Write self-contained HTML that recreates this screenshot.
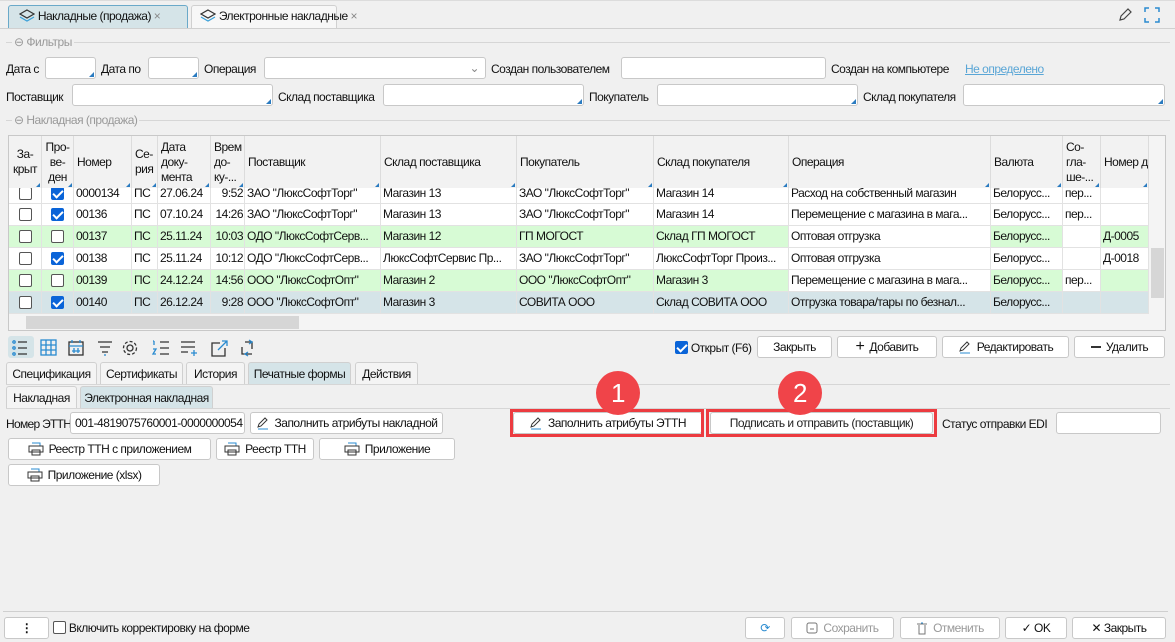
<!DOCTYPE html><html><head><meta charset="utf-8"><style>
*{box-sizing:border-box;margin:0;padding:0}
body{width:1175px;height:642px;background:#f0f0f0;font-family:"Liberation Sans",sans-serif;font-size:12px;color:#111;position:relative;overflow:hidden;letter-spacing:-0.5px}
.a{position:absolute}
.inp{position:absolute;background:#fff;border:1px solid #c8c8c8;border-radius:3px;height:22px;white-space:nowrap;overflow:hidden}
.inp.t::after{content:"";position:absolute;right:1px;bottom:1px;border-left:5px solid transparent;border-bottom:5px solid #2a7bc0}
.lbl{position:absolute;white-space:nowrap}
.btn{position:absolute;background:#fff;border:1px solid #c8c8c8;border-radius:3px;height:22px;display:flex;align-items:center;justify-content:center;white-space:nowrap;gap:5px;overflow:hidden}
.grp{position:absolute;color:#999;white-space:nowrap}
.hl{position:absolute;height:1px;background:#d6d6d6}
.tab{position:absolute;height:22px;border:1px solid #d0d0d0;border-bottom:none;border-radius:3px 3px 0 0;background:#f4f4f4;display:flex;align-items:center;justify-content:center;white-space:nowrap}
.tab.s{background:#d5e4e8}
.grid{position:absolute;left:8px;top:135px;width:1158px;height:196px;border:1px solid #c8c8c8;background:#fff;overflow:hidden}
.c{position:absolute;overflow:hidden;white-space:nowrap;text-overflow:ellipsis;padding:0 2px;border-right:1px solid #e2e2e2;border-bottom:1px solid #e2e2e2;line-height:21px;height:22px}
.h{position:absolute;z-index:2;background:#f2f2f2;border-right:1px solid #dcdcdc;padding:2px 3px;height:52px;line-height:15px;display:flex;align-items:center;overflow:hidden;white-space:nowrap}
.h::after{content:"";position:absolute;right:1px;bottom:1px;border-left:4px solid transparent;border-bottom:4px solid #2a7bc0}
.cb{display:inline-block;width:13px;height:13px;border:1px solid #555;border-radius:2px;background:#fff;vertical-align:middle}
.cb.on{background:#0a64d8;border-color:#0a64d8;position:relative}
.cb.on::after{content:"";position:absolute;left:3px;top:0px;width:4px;height:8px;border:solid #fff;border-width:0 2px 2px 0;transform:rotate(45deg)}
.badge{position:absolute;width:44px;height:44px;border-radius:50%;background:#f04449;color:#fff;font-size:26px;display:flex;align-items:center;justify-content:center}
.red{position:absolute;border:3px solid #ec3b40}
</style></head><body>
<div class="a" style="left:0;top:0;width:1175px;height:1px;background:#dcdcdc"></div>
<div class="a" style="left:8px;top:5px;width:180px;height:23px;background:#d5e4e8;border:1px solid #6aa9c9;border-bottom:none;border-radius:3px 3px 0 0"></div>
<div class="lbl" style="left:19px;top:9px">
<svg width="16" height="14" style="vertical-align:-3px"><path d="M8 1L15 5 8 9 1 5Z" fill="none" stroke="#333" stroke-width="1.2"/><path d="M1 8L8 12 15 8" fill="none" stroke="#3aa0d8" stroke-width="1.2"/></svg> Накладные (продажа) <span style="color:#888">×</span></div>
<div class="a" style="left:191px;top:5px;width:146px;height:23px;background:#f7f7f7;border:1px solid #d0d0d0;border-bottom:none;border-radius:3px 3px 0 0"></div>
<div class="lbl" style="left:200px;top:9px">
<svg width="16" height="14" style="vertical-align:-3px"><path d="M8 1L15 5 8 9 1 5Z" fill="none" stroke="#333" stroke-width="1.2"/><path d="M1 8L8 12 15 8" fill="none" stroke="#3aa0d8" stroke-width="1.2"/></svg> Электронные накладные <span style="color:#888">×</span></div>
<div class="a" style="left:0;top:28px;width:1175px;height:1px;background:#d0d0d0"></div>
<svg class="a" style="left:1117px;top:7px" width="16" height="16"><path d="M3 13L4 9 11 2 14 5 7 12Z" fill="none" stroke="#444" stroke-width="1.2"/></svg>
<svg class="a" style="left:1144px;top:7px" width="16" height="16"><path d="M1 5V1H5M11 1H15V5M15 11V15H11M5 15H1V11" fill="none" stroke="#2a8bd0" stroke-width="1.5"/></svg>

<div class="hl" style="left:6px;top:42px;width:1164px"></div>
<div class="grp" style="left:12px;top:35px;background:#f0f0f0;padding:0 2px">⊖ Фильтры</div>
<div class="lbl" style="left:6px;top:62px">Дата с</div><div class="inp t" style="left:45px;top:57px;width:51px"></div>
<div class="lbl" style="left:101px;top:62px">Дата по</div><div class="inp t" style="left:148px;top:57px;width:51px"></div>
<div class="lbl" style="left:204px;top:62px">Операция</div><div class="inp" style="left:264px;top:57px;width:222px"><span class="a" style="right:6px;top:3px;color:#888">⌄</span></div>
<div class="lbl" style="left:491px;top:62px">Создан пользователем</div><div class="inp" style="left:621px;top:57px;width:205px"></div>
<div class="lbl" style="left:831px;top:62px">Создан на компьютере</div><div class="lbl" style="left:965px;top:62px;color:#5aa6d6;text-decoration:underline">Не определено</div>
<div class="lbl" style="left:6px;top:90px">Поставщик</div><div class="inp t" style="left:72px;top:84px;width:201px"></div>
<div class="lbl" style="left:278px;top:90px">Склад поставщика</div><div class="inp t" style="left:383px;top:84px;width:201px"></div>
<div class="lbl" style="left:589px;top:90px">Покупатель</div><div class="inp t" style="left:657px;top:84px;width:201px"></div>
<div class="lbl" style="left:863px;top:90px">Склад покупателя</div><div class="inp t" style="left:963px;top:84px;width:202px"></div>
<div class="hl" style="left:6px;top:120px;width:1164px"></div>
<div class="grp" style="left:12px;top:113px;background:#f0f0f0;padding:0 2px">⊖ Накладная (продажа)</div>

<div class="grid">
<div class="h" style="left:0;top:0;width:33px;justify-content:center;text-align:center">За-<br>крыт</div>
<div class="h" style="left:33px;top:0;width:32px;justify-content:center;text-align:center">Про-<br>ве-<br>ден</div>
<div class="h" style="left:65px;top:0;width:58px">Номер</div>
<div class="h" style="left:123px;top:0;width:26px">Се-<br>рия</div>
<div class="h" style="left:149px;top:0;width:53px">Дата<br>доку-<br>мента</div>
<div class="h" style="left:202px;top:0;width:34px">Врем<br>до-<br>ку-...</div>
<div class="h" style="left:236px;top:0;width:136px">Поставщик</div>
<div class="h" style="left:372px;top:0;width:136px">Склад поставщика</div>
<div class="h" style="left:508px;top:0;width:137px">Покупатель</div>
<div class="h" style="left:645px;top:0;width:135px">Склад покупателя</div>
<div class="h" style="left:780px;top:0;width:202px">Операция</div>
<div class="h" style="left:982px;top:0;width:72px">Валюта</div>
<div class="h" style="left:1054px;top:0;width:38px">Со-<br>гла-<br>ше-...</div>
<div class="h" style="left:1092px;top:0;width:48px">Номер д</div>
<div class="a" style="left:1140px;top:0;width:17px;height:196px;background:#f4f4f4;z-index:3"></div>
<div class="a" style="left:1142px;top:112px;width:13px;height:50px;background:#d6d6d6;z-index:3"></div>
<div class="a" style="left:0;top:178px;width:1140px;height:17px;background:#f4f4f4;z-index:3"></div>
<div class="a" style="left:17px;top:180px;width:273px;height:13px;background:#d6d6d6;z-index:3"></div>
<div id="rows"></div>
</div>
<script>
var cols=[[0,33],[33,32],[65,58],[123,26],[149,53],[202,34],[236,136],[372,136],[508,137],[645,135],[780,202],[982,72],[1054,38],[1092,48]];
var R=[
[47,"#fff",0,1,"0000134","ПС","27.06.24","9:52",'ЗАО "ЛюксСофтТорг"',"Магазин 13",'ЗАО "ЛюксСофтТорг"',"Магазин 14","Расход на собственный магазин","Белорусс...","пер...",""],
[68,"#fff",0,1,"00136","ПС","07.10.24","14:26",'ЗАО "ЛюксСофтТорг"',"Магазин 13",'ЗАО "ЛюксСофтТорг"',"Магазин 14","Перемещение с магазина в мага...","Белорусс...","пер...",""],
[90,"#d7fbd5",0,0,"00137","ПС","25.11.24","10:03",'ОДО "ЛюксСофтСерв...',"Магазин 12","ГП МОГОСТ","Склад ГП МОГОСТ","Оптовая отгрузка","Белорусс...","","Д-0005"],
[112,"#fff",0,1,"00138","ПС","25.11.24","10:12",'ОДО "ЛюксСофтСерв...',"ЛюксСофтСервис Пр...",'ЗАО "ЛюксСофтТорг"',"ЛюксСофтТорг Произ...","Оптовая отгрузка","Белорусс...","","Д-0018"],
[134,"#d7fbd5",0,0,"00139","ПС","24.12.24","14:56",'ООО "ЛюксСофтОпт"',"Магазин 2",'ООО "ЛюксСофтОпт"',"Магазин 3","Перемещение с магазина в мага...","Белорусс...","пер...",""],
[156,"#d5e4e8",0,1,"00140","ПС","26.12.24","9:28",'ООО "ЛюксСофтОпт"',"Магазин 3","СОВИТА ООО","Склад СОВИТА ООО","Отгрузка товара/тары по безнал...","Белорусс...","",""]];
var h="";
R.forEach(function(r,i){var y=r[0];var ht=i==0?21:22;
cols.forEach(function(c,j){var bg=r[1];if(r[1]=="#d7fbd5"&&(j==10||j==12))bg="#fff";
var txt;if(j<2){txt='<span class="cb'+(r[2+j]?' on':'')+'"></span>';}else txt=r[2+j];
var st="left:"+c[0]+"px;top:"+y+"px;width:"+c[1]+"px;height:"+ht+"px;background:"+bg+";"+(j<2?"text-align:center;":"")+(j==5?"text-align:right;text-overflow:clip;padding:0 1px;":"");
h+='<div class="c" style="'+st+'">'+txt+'</div>';});});
document.getElementById("rows").innerHTML=h;
</script>

<div class="a" style="left:8px;top:336px;width:26px;height:22px;background:#d5e4e8;border-radius:3px"></div>
<svg class="a" style="left:12px;top:339px" width="250" height="18" fill="none" stroke-width="1.3">
<g stroke="#2a8bd0"><circle cx="2" cy="3" r="1.2"/><circle cx="2" cy="9" r="1.2"/><circle cx="2" cy="15" r="1.2"/></g><g stroke="#333"><path d="M6 3H15M6 9H15M6 15H15"/></g>
<rect x="29" y="1" width="15" height="15" stroke="#2a8bd0"/><path d="M29 6H44M29 11H44M34 1V16M39 1V16" stroke="#2a8bd0"/>
<rect x="57" y="3" width="14" height="13" stroke="#333"/><path d="M57 7H71M60 1V4M68 1V4M62 9V14M66 9V14M60 12H68" stroke="#2a8bd0"/>
<path d="M86 3H100M88 8H98M90 13H96" stroke="#333"/><path d="M92 16H94" stroke="#2a8bd0"/>
<circle cx="118" cy="9" r="3" stroke="#333"/><circle cx="118" cy="9" r="6.5" stroke="#333" stroke-dasharray="3 2"/>
<path d="M142 2V6M141 10H144L141 15H144M141 2H142" stroke="#2a8bd0"/><path d="M148 3H157M148 9H157M148 15H157" stroke="#333"/>
<path d="M169 3H183M169 8H183M169 13H176" stroke="#333"/><path d="M182 11V17M179 14H185" stroke="#2a8bd0"/>
<path d="M208 4H200V17H213V9" stroke="#333"/><path d="M206 11L215 2M210 2H215V7" stroke="#2a8bd0"/>
<path d="M233 3H240V10M230 8V15H240" stroke="#333"/><path d="M236 13L233 15 236 17M237 1L240 3 237 5" stroke="#2a8bd0"/>
</svg>
<div class="lbl" style="left:675px;top:341px"><span class="cb on" style="vertical-align:-2px"></span> Открыт (F6)</div>
<div class="btn" style="left:757px;top:336px;width:75px">Закрыть</div>
<div class="btn" style="left:837px;top:336px;width:100px"><b style="font-size:16px;font-weight:normal">+</b> Добавить</div>
<div class="btn" style="left:942px;top:336px;width:127px"><svg width="14" height="14"><path d="M2 11L3 8 9 2 11 4 5 10Z" fill="none" stroke="#333"/><path d="M2 13H12" stroke="#2a8bd0"/></svg> Редактировать</div>
<div class="btn" style="left:1074px;top:336px;width:91px"><span style="display:inline-block;width:10px;height:2px;background:#333"></span> Удалить</div>

<div class="tab" style="left:6px;top:362px;width:91px">Спецификация</div>
<div class="tab" style="left:100px;top:362px;width:83px">Сертификаты</div>
<div class="tab" style="left:186px;top:362px;width:59px">История</div>
<div class="tab s" style="left:248px;top:362px;width:103px">Печатные формы</div>
<div class="tab" style="left:355px;top:362px;width:63px">Действия</div>
<div class="hl" style="left:6px;top:384px;width:1164px"></div>
<div class="tab" style="left:6px;top:386px;width:71px">Накладная</div>
<div class="tab s" style="left:80px;top:386px;width:133px">Электронная накладная</div>
<div class="hl" style="left:6px;top:408px;width:1164px"></div>

<div class="lbl" style="left:6px;top:417px;letter-spacing:-0.7px">Номер ЭТТН</div>
<div class="inp" style="left:70px;top:412px;width:175px;padding:3px 4px">001-4819075760001-0000000054</div>
<div class="btn" style="left:250px;top:412px;width:193px"><svg width="14" height="14"><path d="M2 11L3 8 9 2 11 4 5 10Z" fill="none" stroke="#333"/><path d="M2 13H12" stroke="#2a8bd0"/></svg> Заполнить атрибуты накладной</div>
<div class="btn" style="left:513px;top:412px;width:189px"><svg width="14" height="14"><path d="M2 11L3 8 9 2 11 4 5 10Z" fill="none" stroke="#333"/><path d="M2 13H12" stroke="#2a8bd0"/></svg> Заполнить атрибуты ЭТТН</div>
<div class="red" style="left:510px;top:409px;width:194px;height:28px"></div>
<div class="btn" style="left:710px;top:412px;width:223px;color:#222">Подписать и отправить (поставщик)</div>
<div class="red" style="left:706px;top:409px;width:231px;height:28px"></div>
<div class="badge" style="left:596px;top:371px">1</div>
<div class="badge" style="left:778px;top:371px">2</div>
<div class="lbl" style="left:942px;top:417px">Статус отправки EDI</div>
<div class="inp" style="left:1056px;top:412px;width:105px"></div>

<div class="btn" style="left:8px;top:438px;width:203px"><svg width="16" height="14" fill="none"><path d="M4 1H12V4" stroke="#2a8bd0"/><rect x="1" y="4" width="14" height="6" stroke="#333"/><rect x="4" y="8" width="8" height="5" stroke="#333"/></svg> Реестр ТТН с приложением</div>
<div class="btn" style="left:216px;top:438px;width:98px"><svg width="16" height="14" fill="none"><path d="M4 1H12V4" stroke="#2a8bd0"/><rect x="1" y="4" width="14" height="6" stroke="#333"/><rect x="4" y="8" width="8" height="5" stroke="#333"/></svg> Реестр ТТН</div>
<div class="btn" style="left:319px;top:438px;width:136px"><svg width="16" height="14" fill="none"><path d="M4 1H12V4" stroke="#2a8bd0"/><rect x="1" y="4" width="14" height="6" stroke="#333"/><rect x="4" y="8" width="8" height="5" stroke="#333"/></svg> Приложение</div>
<div class="btn" style="left:8px;top:464px;width:152px"><svg width="16" height="14" fill="none"><path d="M4 1H12V4" stroke="#2a8bd0"/><rect x="1" y="4" width="14" height="6" stroke="#333"/><rect x="4" y="8" width="8" height="5" stroke="#333"/></svg> Приложение (xlsx)</div>

<div class="hl" style="left:3px;top:611px;width:1165px;background:#cfcfcf"></div>
<div class="btn" style="left:4px;top:617px;width:45px;font-weight:bold">⋮</div>
<div class="lbl" style="left:53px;top:621px"><span class="cb" style="vertical-align:-2px"></span> Включить корректировку на форме</div>
<div class="btn" style="left:745px;top:617px;width:40px;color:#2a8bd0">⟳</div>
<div class="btn" style="left:791px;top:617px;width:103px;color:#999"><svg width="12" height="12" fill="none"><rect x="1" y="1" width="10" height="10" rx="2" stroke="#777"/><path d="M4 7H8" stroke="#777"/></svg> Сохранить</div>
<div class="btn" style="left:900px;top:617px;width:100px;color:#999"><svg width="12" height="13" fill="none"><path d="M1 2H11M3 3V12H9V3" stroke="#777"/><path d="M5 1H7" stroke="#2a8bd0"/></svg> Отменить</div>
<div class="btn" style="left:1005px;top:617px;width:62px">✓ OK</div>
<div class="btn" style="left:1072px;top:617px;width:94px">✕ Закрыть</div>
</body></html>
